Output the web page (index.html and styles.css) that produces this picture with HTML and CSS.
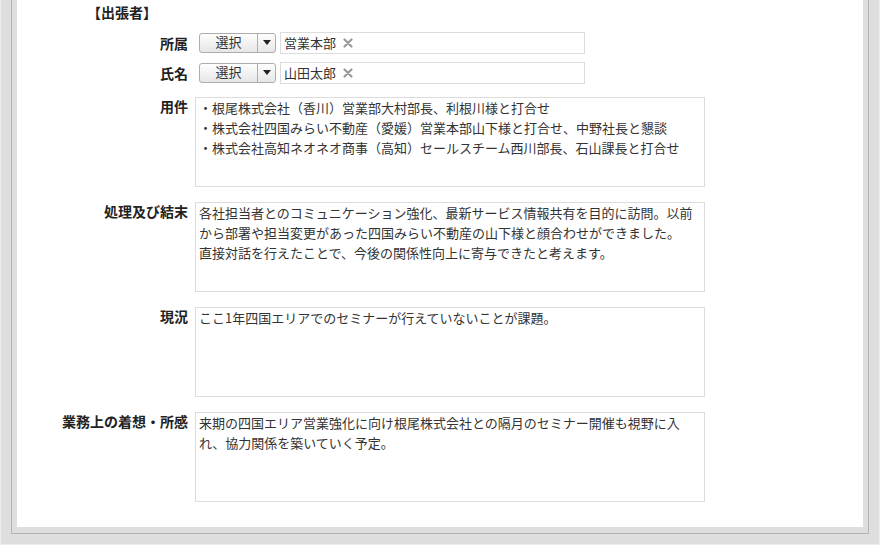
FILE: index.html
```html
<!DOCTYPE html>
<html lang="ja">
<head>
  <meta charset="UTF-8">
  <title>出張報告</title>
  <link rel="stylesheet" href="styles.css">
</head>
<body>
  <div class="frame">
    <div class="inner">
      <div class="panel">
        <div class="section-title">【出張者】</div>

        <!-- 所属 / 氏名 -->
        <div class="row row-pick">
          <div class="label">所属</div>
          <button class="select-btn"><span class="select-text">選択</span><span class="select-arrow"><i></i></span></button>
          <div class="picked">
            <span>営業本部</span>
            <svg class="remove" width="10" height="10" viewBox="0 0 10 10"><path d="M1.5 1.5 L8.5 8.5 M8.5 1.5 L1.5 8.5" stroke="#9a9a9a" stroke-width="2.2" stroke-linecap="round"/></svg>
          </div>
        </div>
        <div class="row row-pick">
          <div class="label">氏名</div>
          <button class="select-btn"><span class="select-text">選択</span><span class="select-arrow"><i></i></span></button>
          <div class="picked">
            <span>山田太郎</span>
            <svg class="remove" width="10" height="10" viewBox="0 0 10 10"><path d="M1.5 1.5 L8.5 8.5 M8.5 1.5 L1.5 8.5" stroke="#9a9a9a" stroke-width="2.2" stroke-linecap="round"/></svg>
          </div>
        </div>

        <!-- 報告内容 -->
        <div class="row row-area">
          <div class="label">用件</div>
          <textarea class="area">・根尾株式会社（香川）営業部大村部長、利根川様と打合せ
・株式会社四国みらい不動産（愛媛）営業本部山下様と打合せ、中野社長と懇談
・株式会社高知ネオネオ商事（高知）セールスチーム西川部長、石山課長と打合せ</textarea>
        </div>
        <div class="row row-area">
          <div class="label">処理及び結末</div>
          <textarea class="area">各社担当者とのコミュニケーション強化、最新サービス情報共有を目的に訪問。以前から部署や担当変更があった四国みらい不動産の山下様と顔合わせができました。
直接対話を行えたことで、今後の関係性向上に寄与できたと考えます。</textarea>
        </div>
        <div class="row row-area">
          <div class="label">現況</div>
          <textarea class="area">ここ1年四国エリアでのセミナーが行えていないことが課題。</textarea>
        </div>
        <div class="row row-area">
          <div class="label">業務上の着想・所感</div>
          <textarea class="area">来期の四国エリア営業強化に向け根尾株式会社との隔月のセミナー開催も視野に入れ、協力関係を築いていく予定。</textarea>
        </div>
      </div>
    </div>
  </div>
</body>
</html>
```

FILE: styles.css
```css
* {
  margin: 0;
  padding: 0;
  box-sizing: border-box;
}

body {
  font-family: "Noto Sans CJK JP", "Liberation Sans", sans-serif;
  font-size: 13px;
  color: #333;
  background-color: #dedede;
}

.frame {
  height: 545px;
  padding: 0 10px 10px;
  border: 1px solid #ececec;
  border-top: none;
}

.inner {
  padding: 0 5px 6px;
  border: 1px solid #b3b3b3;
  border-top: none;
}

.panel {
  background-color: #fff;
  padding: 2px 0 25px;
}

.section-title {
  font-size: 14px;
  font-weight: bold;
  line-height: 20px;
  padding-left: 70px;
  color: #222;
}

.row {
  display: flex;
}

.row-pick {
  height: 22px;
  align-items: center;
  margin-top: 8px;
}

.section-title + .row-pick {
  margin-top: 10px;
}

.row-area {
  margin-top: 15px;
}

.row-pick + .row-area {
  margin-top: 13px;
}

.label {
  width: 171px;
  flex-shrink: 0;
  text-align: right;
  font-size: 14px;
  font-weight: bold;
  line-height: 20px;
  color: #222;
}

.row-area .label {
  line-height: 19px;
}

/* select button */
.select-btn {
  display: flex;
  width: 77px;
  height: 20px;
  margin-left: 11px;
  border: 1px solid #adadad;
  border-radius: 3px;
  background: linear-gradient(#fefefe, #e6e6e6);
  font: inherit;
  color: #333;
  cursor: pointer;
}

.select-text {
  width: 58px;
  height: 18px;
  line-height: 16px;
  text-align: center;
  border-right: 1px solid #adadad;
}

.select-arrow {
  flex: 1;
  display: flex;
  align-items: center;
  justify-content: center;
  height: 18px;
}

.select-arrow i {
  margin-top: -1px;
  border-left: 4px solid transparent;
  border-right: 4px solid transparent;
  border-top: 5px solid #222;
}

.picked {
  display: flex;
  align-items: center;
  width: 305px;
  height: 22px;
  margin-left: 4px;
  padding-left: 3px;
  border: 1px solid #dcdcdc;
  line-height: 18px;
}

.remove {
  margin-left: 7px;
}

/* text areas */
.area {
  width: 510px;
  height: 90px;
  margin-left: 7px;
  padding: 0 3px;
  border: 1px solid #dcdcdc;
  font: inherit;
  line-height: 20px;
  color: #333;
  resize: none;
  overflow: hidden;
  outline: none;
}
```
